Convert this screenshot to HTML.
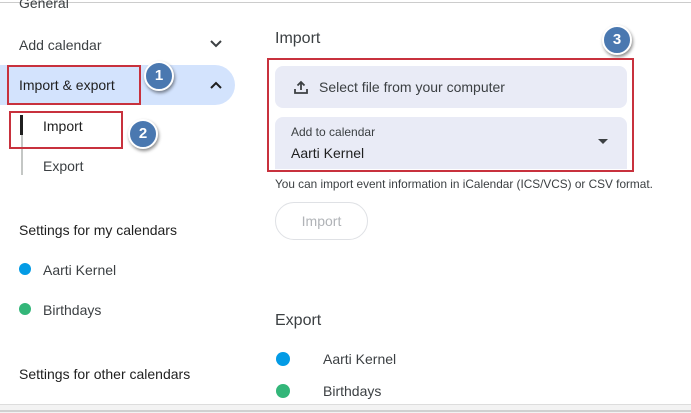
<!DOCTYPE html>
<html><head><style>
body{margin:0;width:691px;height:412px;background:#fff;position:relative;overflow:hidden;font-family:"Liberation Sans",Arial,sans-serif;color:#3c4043}
.a{position:absolute;white-space:nowrap}
.t{font-size:14px;color:#3c4043}
.badge{position:absolute;width:26px;height:26px;border-radius:50%;background:#4a78b0;border:2px solid #fff;box-shadow:1px 2px 3px rgba(0,0,0,.45);color:#fff;font-weight:bold;font-size:15px;text-align:center;line-height:26px}
.red{position:absolute;border:2px solid #c8313d;box-sizing:border-box}
.dot{position:absolute;width:14px;height:14px;border-radius:50%}
</style></head><body>
<div class="a" style="left:0;top:2px;width:691px;height:1px;background:#ccc"></div>
<div class="a" style="left:0;top:404px;width:691px;height:8px;background:#f3f3f3;border-top:1px solid #ddd"></div>
<div class="a" style="left:0;top:410px;width:691px;height:2px;background:#d0d0d0"></div>

<div class="a t" style="left:19px;top:-5px">General</div>
<div class="a t" style="left:19px;top:37px">Add calendar</div>
<svg class="a" style="left:209px;top:39px" width="14" height="10" viewBox="0 0 14 10"><path d="M2 2l5 5 5-5" fill="none" stroke="#3c4043" stroke-width="2"/></svg>
<div class="a" style="left:0;top:65px;width:235px;height:40px;background:#d3e3fd;border-radius:0 20px 20px 0"></div>
<div class="a t" style="left:19px;top:77px;color:#1f1f1f">Import &amp; export</div>
<svg class="a" style="left:209px;top:80px" width="14" height="10" viewBox="0 0 14 10"><path d="M2 8l5-5 5 5" fill="none" stroke="#1f1f1f" stroke-width="2"/></svg>
<div class="red" style="left:7px;top:65px;width:134px;height:40px"></div>
<div class="badge" style="left:144px;top:61px">1</div>
<div class="a" style="left:21px;top:115px;width:2px;height:60px;background:#c4c7c5"></div>
<div class="a" style="left:20px;top:115px;width:3px;height:20px;background:#1f1f1f"></div>
<div class="a t" style="left:43px;top:118px;color:#1f1f1f">Import</div>
<div class="red" style="left:9px;top:111px;width:114px;height:38px"></div>
<div class="badge" style="left:128px;top:119px">2</div>
<div class="a t" style="left:43px;top:158px">Export</div>

<div class="a t" style="left:19px;top:222px;color:#1f1f1f">Settings for my calendars</div>
<div class="dot" style="left:19px;top:263px;width:12px;height:12px;background:#039be5"></div>
<div class="a t" style="left:43px;top:262px">Aarti Kernel</div>
<div class="dot" style="left:19px;top:303px;width:12px;height:12px;background:#33b679"></div>
<div class="a t" style="left:43px;top:302px">Birthdays</div>
<div class="a t" style="left:19px;top:366px;color:#1f1f1f">Settings for other calendars</div>

<div class="a" style="left:275px;top:30px;font-size:16px;color:#3c4043">Import</div>
<div class="badge" style="left:602px;top:25px">3</div>
<div class="a" style="left:275px;top:66px;width:352px;height:42px;background:#e9ebf6;border-radius:8px"></div>
<svg class="a" style="left:293px;top:79px" width="16" height="16" viewBox="0 0 16 16"><path d="M8 11V3M4.5 6.5L8 3l3.5 3.5M2 10v4h12v-4" fill="none" stroke="#3c4043" stroke-width="1.8"/></svg>
<div class="a t" style="left:319px;top:79px">Select file from your computer</div>
<div class="a" style="left:275px;top:117px;width:352px;height:52px;background:#e9ebf6;border-radius:8px 8px 0 0"></div>
<div class="a" style="left:291px;top:125px;font-size:12px">Add to calendar</div>
<div class="a t" style="left:291px;top:145px;color:#1f1f1f">Aarti Kernel</div>
<svg class="a" style="left:597px;top:139px" width="12" height="6" viewBox="0 0 12 6"><path d="M1 0h10L6 5z" fill="#3c4043"/></svg>
<div class="red" style="left:267px;top:58px;width:367px;height:114px"></div>
<div class="a" style="left:275px;top:177px;font-size:11.8px">You can import event information in iCalendar (ICS/VCS) or CSV format.</div>
<div class="a" style="left:275px;top:202px;width:93px;height:38px;border:1px solid #dfe1e5;border-radius:19px;box-sizing:border-box;text-align:center;line-height:36px;font-size:14px;color:#b0b3b7">Import</div>

<div class="a" style="left:275px;top:312px;font-size:16px">Export</div>
<div class="dot" style="left:276px;top:352px;background:#039be5"></div>
<div class="a t" style="left:323px;top:351px">Aarti Kernel</div>
<div class="dot" style="left:276px;top:384px;background:#33b679"></div>
<div class="a t" style="left:323px;top:383px">Birthdays</div>
</body></html>
